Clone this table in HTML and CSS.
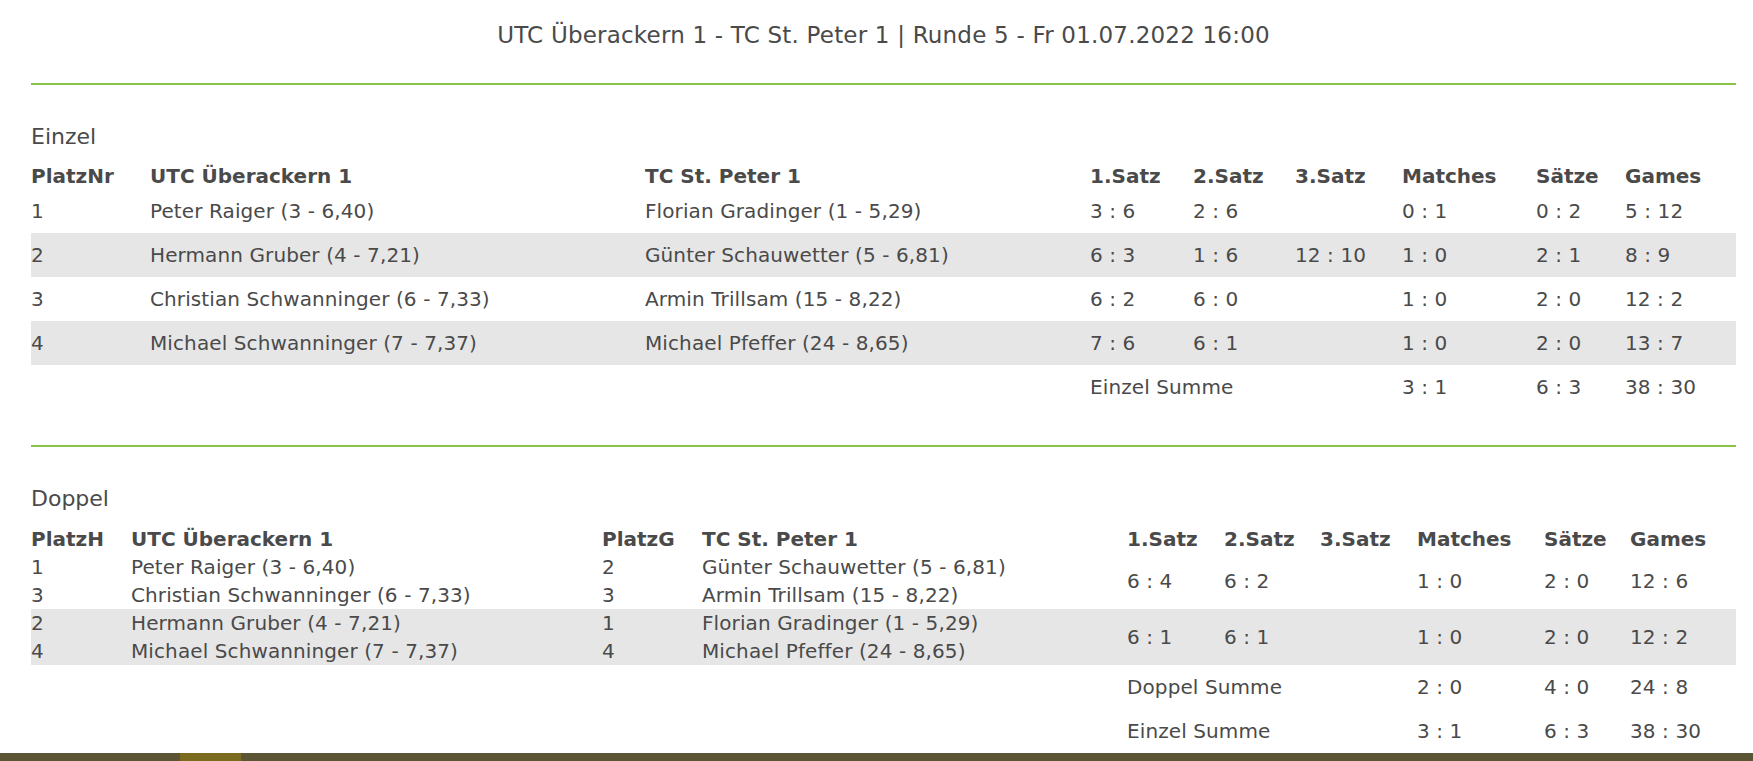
FILE: index.html
```html
<!DOCTYPE html>
<html lang="de">
<head>
    <meta charset="UTF-8">
    <meta name="viewport" content="width=device-width, initial-scale=1.0">
    <title>UTC Überackern 1 - TC St. Peter 1</title>
    <link rel="stylesheet" href="styles.css">
</head>
<body>

    <div class="page">
        <h1 class="title">UTC Überackern 1 - TC St. Peter 1 | Runde 5 - Fr 01.07.2022 16:00</h1>
        <div class="divider"></div>

        <!-- Einzel -->
        <h2 class="section-title">Einzel</h2>
        <table class="results">
            <colgroup>
                <col style="width:119px"><col style="width:495px"><col style="width:445px">
                <col style="width:103px"><col style="width:102px"><col style="width:107px">
                <col style="width:134px"><col style="width:89px"><col style="width:111px">
            </colgroup>
            <tr class="head">
                <th>PlatzNr</th><th>UTC Überackern 1</th><th>TC St. Peter 1</th>
                <th>1.Satz</th><th>2.Satz</th><th>3.Satz</th><th>Matches</th><th>Sätze</th><th>Games</th>
            </tr>
            <tr class="row">
                <td>1</td><td>Peter Raiger (3 - 6,40)</td><td>Florian Gradinger (1 - 5,29)</td>
                <td>3 : 6</td><td>2 : 6</td><td></td><td>0 : 1</td><td>0 : 2</td><td>5 : 12</td>
            </tr>
            <tr class="row alt">
                <td>2</td><td>Hermann Gruber (4 - 7,21)</td><td>Günter Schauwetter (5 - 6,81)</td>
                <td>6 : 3</td><td>1 : 6</td><td>12 : 10</td><td>1 : 0</td><td>2 : 1</td><td>8 : 9</td>
            </tr>
            <tr class="row">
                <td>3</td><td>Christian Schwanninger (6 - 7,33)</td><td>Armin Trillsam (15 - 8,22)</td>
                <td>6 : 2</td><td>6 : 0</td><td></td><td>1 : 0</td><td>2 : 0</td><td>12 : 2</td>
            </tr>
            <tr class="row alt">
                <td>4</td><td>Michael Schwanninger (7 - 7,37)</td><td>Michael Pfeffer (24 - 8,65)</td>
                <td>7 : 6</td><td>6 : 1</td><td></td><td>1 : 0</td><td>2 : 0</td><td>13 : 7</td>
            </tr>
            <tr class="row">
                <td colspan="3"></td><td colspan="3">Einzel Summe</td>
                <td>3 : 1</td><td>6 : 3</td><td>38 : 30</td>
            </tr>
        </table>

        <div class="divider divider-low"></div>

        <!-- Doppel -->
        <h2 class="section-title section-title-doppel">Doppel</h2>
        <table class="results doppel">
            <colgroup>
                <col style="width:100px"><col style="width:471px"><col style="width:100px"><col style="width:425px">
                <col style="width:97px"><col style="width:96px"><col style="width:97px">
                <col style="width:127px"><col style="width:86px"><col style="width:106px">
            </colgroup>
            <tr class="head">
                <th>PlatzH</th><th>UTC Überackern 1</th><th>PlatzG</th><th>TC St. Peter 1</th>
                <th>1.Satz</th><th>2.Satz</th><th>3.Satz</th><th>Matches</th><th>Sätze</th><th>Games</th>
            </tr>
            <tr class="sub">
                <td>1</td><td>Peter Raiger (3 - 6,40)</td><td>2</td><td>Günter Schauwetter (5 - 6,81)</td>
                <td rowspan="2">6 : 4</td><td rowspan="2">6 : 2</td><td rowspan="2"></td>
                <td rowspan="2">1 : 0</td><td rowspan="2">2 : 0</td><td rowspan="2">12 : 6</td>
            </tr>
            <tr class="sub">
                <td>3</td><td>Christian Schwanninger (6 - 7,33)</td><td>3</td><td>Armin Trillsam (15 - 8,22)</td>
            </tr>
            <tr class="sub alt">
                <td>2</td><td>Hermann Gruber (4 - 7,21)</td><td>1</td><td>Florian Gradinger (1 - 5,29)</td>
                <td rowspan="2">6 : 1</td><td rowspan="2">6 : 1</td><td rowspan="2"></td>
                <td rowspan="2">1 : 0</td><td rowspan="2">2 : 0</td><td rowspan="2">12 : 2</td>
            </tr>
            <tr class="sub alt">
                <td>4</td><td>Michael Schwanninger (7 - 7,37)</td><td>4</td><td>Michael Pfeffer (24 - 8,65)</td>
            </tr>
            <tr class="row">
                <td colspan="4"></td><td colspan="3">Doppel Summe</td>
                <td>2 : 0</td><td>4 : 0</td><td>24 : 8</td>
            </tr>
            <tr class="row">
                <td colspan="4"></td><td colspan="3">Einzel Summe</td>
                <td>3 : 1</td><td>6 : 3</td><td>38 : 30</td>
            </tr>
        </table>
    </div>

    <footer class="footer">
        <span class="footer-mark"></span>
    </footer>

</body>
</html>
```

FILE: styles.css
```css
body {
    font-family: "DejaVu Sans", Verdana, sans-serif;
    margin: 0;
    padding: 0;
    background-color: #fff;
    color: #4a4a4a;
    overflow: hidden;
}

.page {
    padding: 0 17px 0 31px;
}

.title {
    margin: 22px 0 0;
    font-size: 23px;
    font-weight: normal;
    line-height: 26px;
    letter-spacing: 0.2px;
    text-align: center;
}

.divider {
    height: 2px;
    margin-top: 35px;
    background-color: #8bc34a;
}

.divider-low {
    margin-top: 36px;
}

.section-title {
    margin: 39px 0 0;
    font-size: 22px;
    font-weight: normal;
    line-height: 26px;
}

.section-title-doppel {
    margin-top: 39px;
}

.results {
    width: 100%;
    margin-top: 13px;
    table-layout: fixed;
    border-collapse: collapse;
    border-spacing: 0;
    font-size: 20px;
}

.results th,
.results td {
    padding: 0;
    text-align: left;
    vertical-align: middle;
    white-space: nowrap;
}

.results td {
    letter-spacing: 0.1px;
}

.results th {
    font-weight: bold;
}

.results .head {
    height: 26px;
}

.results .row {
    height: 44px;
}

.results .alt {
    background-color: #e6e6e6;
}

.doppel {
    margin-top: 12px;
}

.doppel .head {
    height: 29px;
}

.doppel .sub {
    height: 28px;
}

.footer {
    height: 40px;
    margin-top: 0;
    background-color: #5b5535;
}

.footer-mark {
    display: block;
    width: 61px;
    height: 100%;
    margin-left: 180px;
    background-color: #7b6b1f;
}
```
